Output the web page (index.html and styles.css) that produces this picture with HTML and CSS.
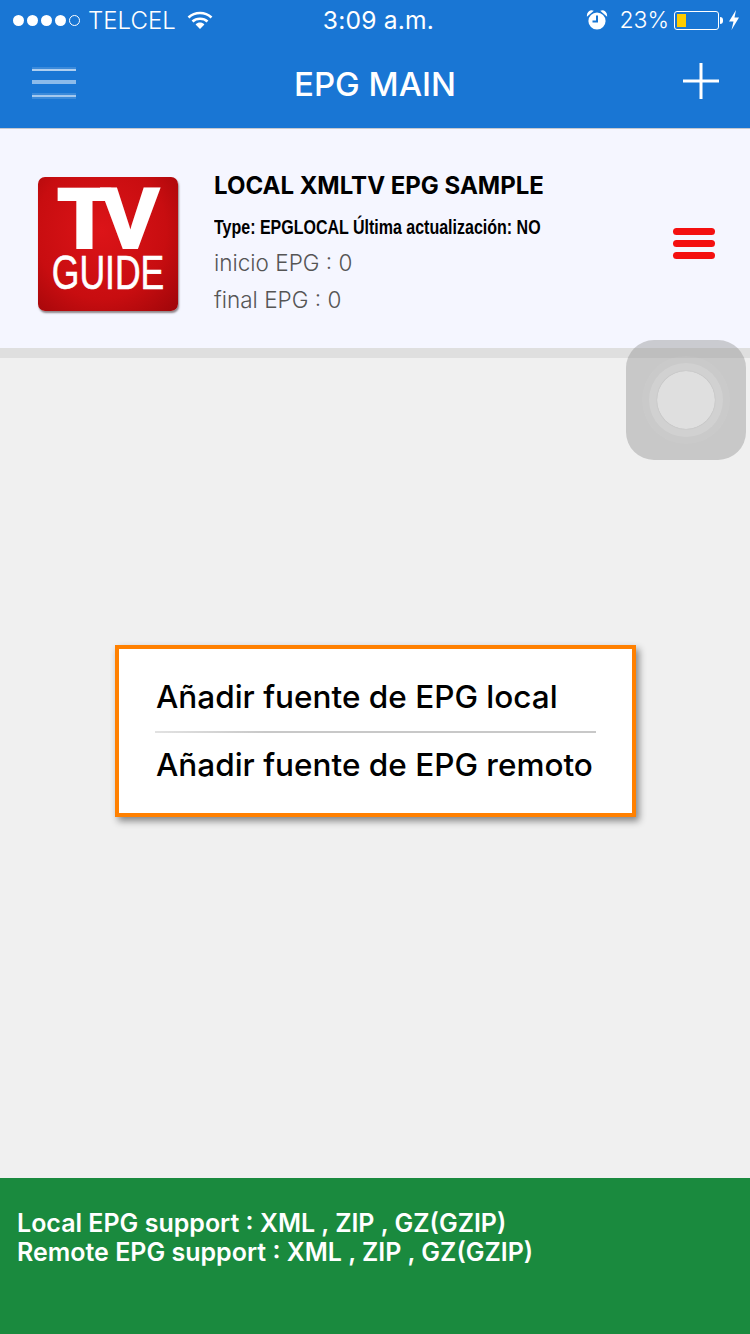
FILE: index.html
```html
<!DOCTYPE html>
<html lang="es">
<head>
<meta charset="utf-8">
<title>EPG MAIN</title>
<link rel="stylesheet" href="styles.css">
</head>
<body>
<div class="app">
  <header class="top">
    <div class="status">
      <div class="status-left">
        <span class="signal"><i></i><i></i><i></i><i></i><i class="off"></i></span>
        <span class="carrier">TELCEL</span>
        <svg class="wifi" width="26" height="20" viewBox="0 0 26 20"><path d="M1.500 7.500C8 1.500 18 1.500 24.500 7.500" fill="none" stroke="#fff" stroke-width="2.600"/><path d="M5.500 11.500C9.500 7.800 16.500 7.800 20.500 11.500" fill="none" stroke="#fff" stroke-width="2.600"/><path d="M8.600 14.400L13 19l4.400-4.600C14.800 12 11.200 12 8.600 14.400z" fill="#fff"/></svg>
      </div>
      <div class="clock">3:09 a.m.</div>
      <div class="status-right">
        <svg class="alarm" width="22" height="22" viewBox="0 0 22 22"><circle cx="11" cy="12" r="8.600" fill="#fff"/><path d="M11 6.500V12.500H6.500" fill="none" stroke="#1976d4" stroke-width="2"/><path d="M1.500 6.500C1.500 3.500 4 1.500 6.500 2L1.500 6.500zM20.500 6.500C20.500 3.500 18 1.500 15.500 2L20.500 6.500z" fill="#fff" stroke="#fff" stroke-width="1.200"/></svg>
        <span class="percent">23%</span>
        <span class="battery"><span class="battery-level"></span></span>
        <span class="battery-tip"></span>
        <svg class="bolt" width="12" height="22" viewBox="0 0 12 22"><path d="M8 1L1 12.500H5.500L3.500 21L11 8.500H6.500L8 1z" fill="#fff"/></svg>
      </div>
    </div>
    <nav class="nav">
      <button class="menu-btn" aria-label="Menú"><i></i><i></i><i></i></button>
      <h1 class="title">EPG MAIN</h1>
      <button class="add-btn" aria-label="Añadir">
        <svg width="36" height="36" viewBox="0 0 36 36"><path d="M18 0V36M0 18H36" stroke="#fff" stroke-width="3"/></svg>
      </button>
    </nav>
  </header>

  <section class="source">
    <div class="logo">
      <span class="logo-tv">TV</span>
      <span class="logo-guide">GUIDE</span>
    </div>
    <div class="source-info">
      <div class="source-name">LOCAL XMLTV EPG SAMPLE</div>
      <div class="source-type">Type: EPGLOCAL Última actualización: NO</div>
      <div class="source-line">inicio EPG : 0</div>
      <div class="source-line">final EPG : 0</div>
    </div>
    <div class="source-handle"><i></i><i></i><i></i></div>
  </section>
  <div class="band"></div>

  <main class="content"></main>

  <footer class="support">
    <p>Local EPG support : XML , ZIP , GZ(GZIP)</p>
    <p>Remote EPG support : XML , ZIP , GZ(GZIP)</p>
  </footer>

  <div class="popup">
    <div class="popup-item">Añadir fuente de EPG local</div>
    <div class="popup-rule"></div>
    <div class="popup-item">Añadir fuente de EPG remoto</div>
  </div>

  <div class="touch"><span class="touch-outer"><span class="touch-mid"><span class="touch-core"></span></span></span></div>
</div>
</body>
</html>
```
FILE: styles.css
```css
* { box-sizing: border-box; }
html, body { margin: 0; padding: 0; }
body { font-family: Inter, "Liberation Sans", sans-serif; background: #f0f0f0; }

.app {
  position: relative;
  width: 750px;
  height: 1334px;
  overflow: hidden;
  display: flex;
  flex-direction: column;
}

/* Blue header: status bar and navigation */
.top {
  background: #1976d4;
  height: 129px;
  border-bottom: 1px solid #c4c8d0;
  color: #fff;
  flex: none;
}
.status {
  height: 40px;
  display: grid;
  grid-template-columns: 1fr auto 1fr;
  align-items: center;
  font-size: 24px;
  padding: 0 10px 0 13px;
}
.status-left, .status-right { display: flex; align-items: center; }
.status-right { justify-content: flex-end; }
.signal { display: flex; gap: 3px; margin-right: 8px; }
.signal i { width: 11px; height: 11px; border-radius: 50%; background: #fff; }
.signal i.off { background: none; border: 1px solid #fff; }
.carrier { font-weight: 300; }
.wifi { margin-left: 11px; margin-top: -1px; }
.clock { font-size: 24.600px; font-weight: 400; letter-spacing: 0.2px; margin-left: 4px; }
.alarm { margin-right: 11px; }
.percent { font-size: 23px; font-weight: 300; margin-right: 5px; }
.battery {
  width: 45px;
  height: 19px;
  border: 1px solid #fff;
  border-radius: 3px;
  padding: 2px;
  display: flex;
}
.battery-level { width: 9px; background: #ffcc00; }
.battery-tip {
  width: 3px;
  height: 7px;
  margin-left: 1px;
  margin-right: 5px;
  background: #fff;
  border-radius: 0 3px 3px 0;
}
.nav {
  height: 88px;
  display: grid;
  grid-template-columns: 1fr auto 1fr;
  align-items: center;
  padding: 0 32px;
}
.menu-btn, .add-btn { background: none; border: 0; padding: 0; display: block; }
.menu-btn {
  width: 44px;
  height: 32px;
  margin-top: -2px;
  display: flex;
  flex-direction: column;
  justify-content: space-between;
}
.menu-btn i { display: block; }
.menu-btn i:nth-child(1) {
  height: 4px;
  background: linear-gradient(rgba(255, 255, 255, 0.15) 0 40%, rgba(255, 255, 255, 0.65) 40% 100%);
}
.menu-btn i:nth-child(2) {
  height: 4px;
  background: rgba(255, 255, 255, 0.5);
}
.menu-btn i:nth-child(3) {
  height: 6px;
  background: linear-gradient(rgba(255, 255, 255, 0.15) 0 34%, rgba(255, 255, 255, 0.6) 34% 70%, rgba(255, 255, 255, 0.15) 70% 100%);
}
.add-btn { width: 36px; height: 36px; justify-self: end; margin-right: -1px; margin-top: -6px; }
.title {
  margin: 0;
  font-size: 33px;
  font-weight: 500;
  line-height: 1;
}

/* Source card */
.source {
  height: 219px;
  background: #f5f6ff;
  display: flex;
  align-items: flex-start;
  padding: 0 35px 0 38px;
  flex: none;
}
.logo {
  width: 140px;
  height: 134px;
  margin-top: 48px;
  border-radius: 7px;
  background: radial-gradient(ellipse at 45% 40%, #dc1418 0%, #c80d10 60%, #9e0609 100%);
  box-shadow: 1px 2px 2px rgba(60, 40, 40, 0.55);
  color: #fff;
  display: flex;
  flex-direction: column;
  align-items: center;
  flex: none;
}
.logo-tv {
  font: 700 84px/64px "Liberation Sans", sans-serif;
  -webkit-text-stroke: 4px #fff;
  margin-top: 9px;
  letter-spacing: -8px;
  margin-left: -7px;
}
.logo-guide {
  font: 400 48px/40px "Liberation Sans", sans-serif;
  -webkit-text-stroke: 0.600px #fff;
  transform: scaleX(0.74);
  margin-top: 3px;
}
.source-info { margin-left: 36px; flex: 1; margin-top: 43px; }
.source-name { font-size: 24px; line-height: 28px; font-weight: 700; color: #000; }
.source-type {
  font: 700 20px/28px "Liberation Sans", sans-serif;
  color: #000;
  margin-top: 13px;
  white-space: nowrap;
  width: 326px;
  transform: scaleX(0.8);
  transform-origin: left center;
}
.source-line { font-size: 22.500px; line-height: 28px; font-weight: 300; color: #555; margin-top: 9px; }
.source-type + .source-line { margin-top: 8px; }
.source-handle {
  width: 42px;
  height: 31px;
  display: flex;
  flex-direction: column;
  justify-content: space-between;
  flex: none;
  margin-top: 99px;
}
.source-handle i { display: block; height: 7px; border-radius: 3.500px; background: #f41010; }

.band { height: 10px; background: #dfdfdf; flex: none; }
.content { flex: 1; background: #f0f0f0; }

/* Footer note */
.support {
  height: 156px;
  flex: none;
  background: #1a8a3e;
  color: #fff;
  padding: 31px 17px 0;
  font-size: 25px;
  font-weight: 600;
  line-height: 29px;
}
.support p { margin: 0; }

/* Add-source popup */
.popup {
  position: absolute;
  left: 115px;
  top: 645px;
  width: 521px;
  height: 172px;
  background: #fff;
  border: 4px solid #ff8000;
  box-shadow: 3px 4px 7px rgba(0, 0, 0, 0.45);
  padding: 14px 36px 0;
  font-size: 31.500px;
  font-weight: 500;
  color: #000;
}
.popup-item { height: 68px; line-height: 68px; padding-left: 1px; white-space: nowrap; }
.popup-rule { height: 2px; background: linear-gradient(90deg, #e2e2e2, #c8c8c8 25%); margin: 0 0 -2px; }

/* Floating assistive button */
.touch {
  position: absolute;
  left: 626px;
  top: 340px;
  width: 120px;
  height: 120px;
  border-radius: 28px;
  background: rgba(150, 150, 150, 0.45);
  display: flex;
  align-items: center;
  justify-content: center;
}
.touch-outer, .touch-mid, .touch-core {
  display: flex;
  align-items: center;
  justify-content: center;
  border-radius: 50%;
}
.touch-outer { width: 88px; height: 88px; background: rgba(255, 255, 255, 0.05); }
.touch-mid { width: 74px; height: 74px; background: rgba(255, 255, 255, 0.14); }
.touch-core { width: 58px; height: 58px; background: #dfdfdf; box-shadow: 0 0 1px rgba(0, 0, 0, 0.2); }
```
